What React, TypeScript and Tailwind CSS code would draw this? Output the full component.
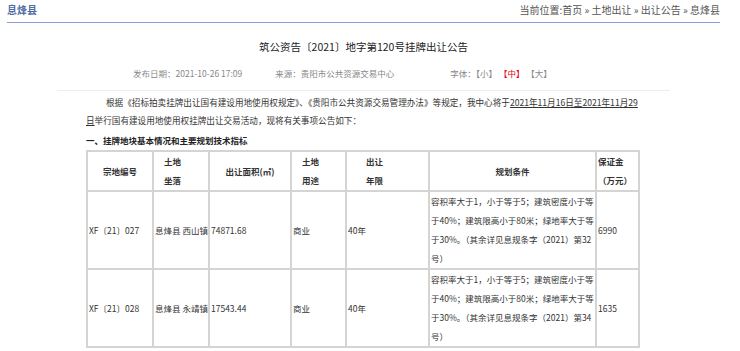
import React from "react";

const rows = [
  {
    code: "XF〔21〕027",
    place: "息烽县 西山镇",
    area: "74871.68",
    use: "商业",
    years: "40年",
    cond: "容积率大于1，小于等于5；建筑密度小于等于40%；建筑限高小于80米；绿地率大于等于30%。（其余详见息规条字（2021）第32号）",
    deposit: "6990",
  },
  {
    code: "XF〔21〕028",
    place: "息烽县 永靖镇",
    area: "17543.44",
    use: "商业",
    years: "40年",
    cond: "容积率大于1，小于等于5；建筑密度小于等于40%；建筑限高小于80米；绿地率大于等于30%。（其余详见息规条字（2021）第34号）",
    deposit: "1635",
  },
];

const cell = "border-2 border-[#d4d4d4] align-middle text-left px-[1px] leading-[19px]";

export default function App() {
  return (
    <div
      className="w-[740px] h-[351px] bg-white overflow-hidden text-[#333]"
      style={{ fontFamily: '"Noto Sans CJK SC", "Noto Sans", sans-serif' }}
    >
      {/* top bar */}
      <div className="ml-[7px] w-[713px] h-[23px] flex items-center justify-between border-b border-[#8a9dd6] pb-[3px]">
        <span className="text-[10px] font-bold text-[#4f6aa6]">息烽县</span>
        <span className="text-[10px] text-[#555]">
          当前位置:首页 » 土地出让 » 出让公告 » 息烽县
        </span>
      </div>

      <div className="ml-[57px] w-[613px]">
        <h1 className="mt-[16px] text-center text-[10.5px] leading-[16px] text-[#222]">
          筑公资告〔2021〕地字第120号挂牌出让公告
        </h1>

        <div className="mt-[12px] h-[12px] flex items-center text-[8.5px] text-[#888]">
          <span className="ml-[76px]">发布日期：2021-10-26 17:09</span>
          <span className="ml-[33px]">来源：贵阳市公共资源交易中心</span>
          <span className="ml-[56px]">
            字体：【小】 <span className="text-[#e60012]">【中】</span> 【大】
          </span>
        </div>

        <div className="mt-[11px] border-t border-[#eeeeee] px-[29px] pt-[2px]">
          <p className="text-[8.6px] leading-[18px] indent-[20px] text-[#333]">
            根据《招标拍卖挂牌出让国有建设用地使用权规定》、《贵阳市公共资源交易管理办法》等规定，我中心将于
            <span className="underline">2021年11月16日至2021年11月29日</span>
            举行国有建设用地使用权挂牌出让交易活动，现将有关事项公告如下：
          </p>
          <p className="mt-[2px] text-[8.5px] leading-[18px] font-bold text-[#222]">
            一、挂牌地块基本情况和主要规划技术指标
          </p>

          <table className="mt-[1px] w-[552px] table-fixed border-collapse text-[8.5px] text-[#333]">
            <colgroup>
              <col className="w-[66px]" />
              <col className="w-[56px]" />
              <col className="w-[82px]" />
              <col className="w-[55px]" />
              <col className="w-[83px]" />
              <col className="w-[167px]" />
              <col className="w-[43px]" />
            </colgroup>
            <thead>
              <tr className="h-[39px] font-bold">
                <th className={`${cell} !text-center`}>宗地编号</th>
                <th className={`${cell} !pl-[10px]`}>
                  土地
                  <br />
                  坐落
                </th>
                <th className={`${cell} !text-center`}>出让面积(㎡)</th>
                <th className={`${cell} !pl-[10px]`}>
                  土地
                  <br />
                  用途
                </th>
                <th className={`${cell} !pl-[19px]`}>
                  出让
                  <br />
                  年限
                </th>
                <th className={`${cell} !text-center`}>规划条件</th>
                <th className={cell}>
                  保证金
                  <br />
                  （万元）
                </th>
              </tr>
            </thead>
            <tbody>
              {rows.map((r) => (
                <tr key={r.code} className="h-[77px]">
                  <td className={cell}>{r.code}</td>
                  <td className={`${cell} whitespace-nowrap`}>{r.place}</td>
                  <td className={cell}>{r.area}</td>
                  <td className={cell}>{r.use}</td>
                  <td className={cell}>{r.years}</td>
                  <td className={cell}>{r.cond}</td>
                  <td className={cell}>{r.deposit}</td>
                </tr>
              ))}
            </tbody>
          </table>
        </div>
      </div>
    </div>
  );
}
